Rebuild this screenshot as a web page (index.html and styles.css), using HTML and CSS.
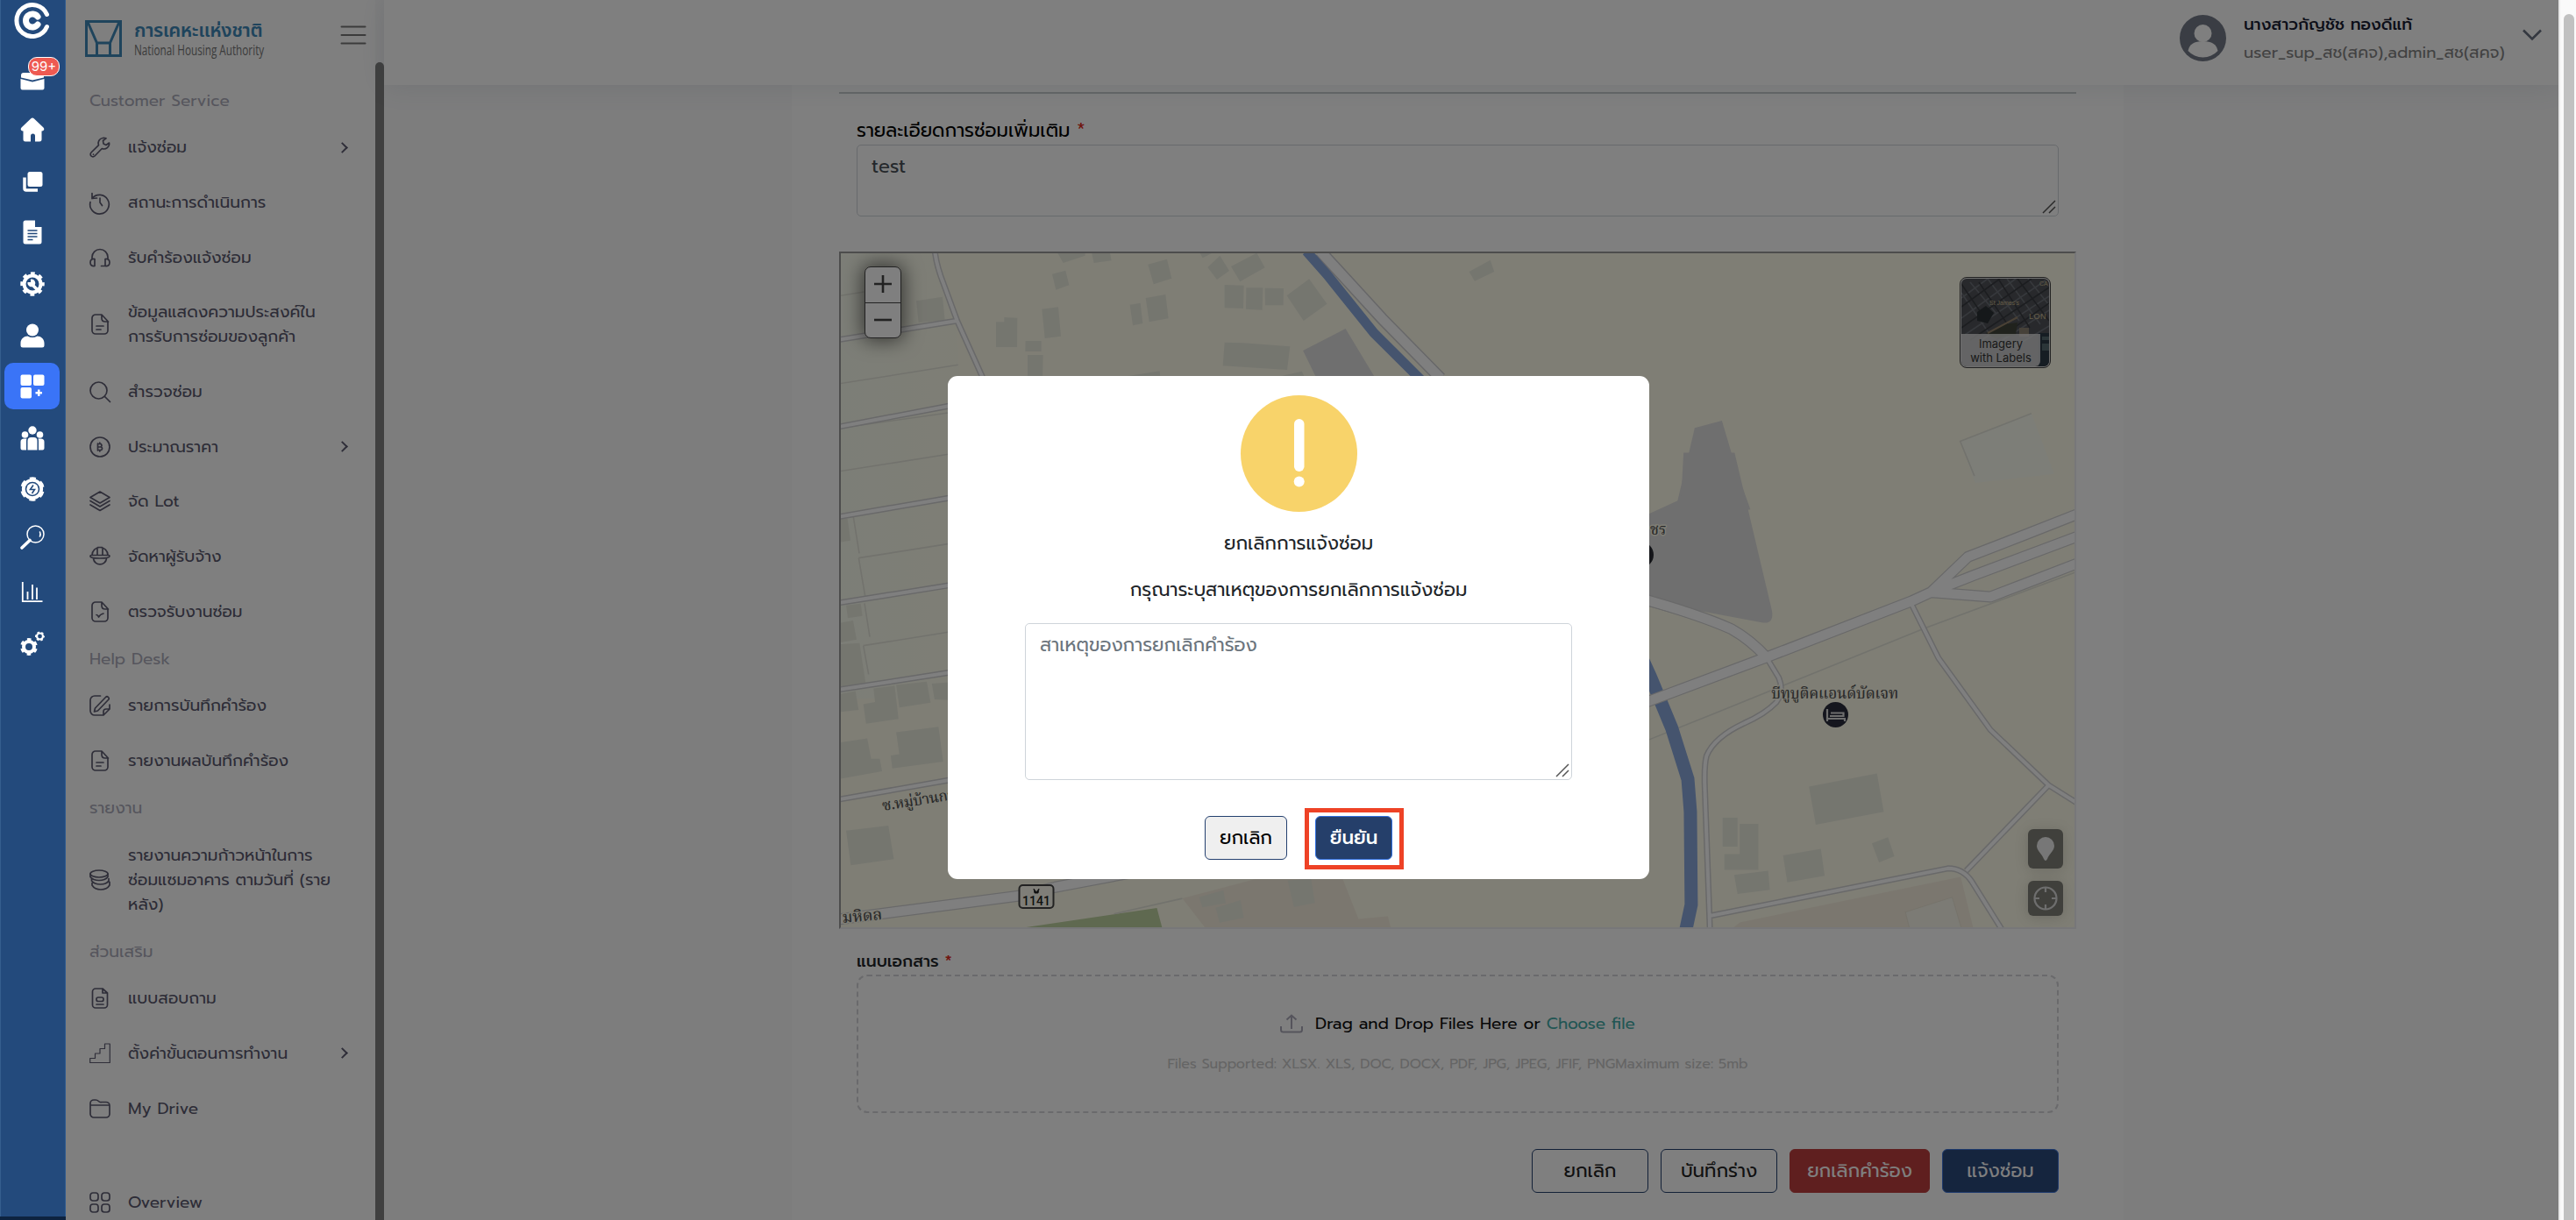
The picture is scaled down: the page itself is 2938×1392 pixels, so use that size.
FILE: index.html
```html
<!DOCTYPE html>
<html lang="th">
<head>
<meta charset="utf-8">
<title>แจ้งซ่อม</title>
<link rel="stylesheet" href="styles.css">
</head>
<body>
<nav class="rail">
  <div class="rail-logo"><svg width="42" height="42" viewBox="0 0 42 42" fill="none" stroke="#fff" stroke-linecap="round"><path d="M37.500 14.500A18 18 0 1 0 37.500 28.500" stroke-width="5"/><path d="M27 17a7.500 7.500 0 1 0 0 9" stroke-width="7"/></svg></div>
  <div class="rail-mail"><svg width="28" height="20" viewBox="0 0 28 20"><path fill="#fff" d="M1 3a3 3 0 0 1 3-3h20a3 3 0 0 1 3 3v2.500L14 8.500 1 5.500zM.5 7 14 10.500 27.500 7v10.500a2 2 0 0 1-2 2h-23a2 2 0 0 1-2-2z"/></svg><span class="badge">99+</span></div>
  <div class="slot"><svg viewBox="0 0 28 28"><path fill="#fff" d="M12 1.500a3 3 0 0 1 4 0l10.500 10c1.500 1.500.8 4-1.500 4h-.5V25a2.500 2.500 0 0 1-2.500 2.500h-5V21a2.500 2.500 0 0 0-5 0v6.500H6A2.500 2.500 0 0 1 3.500 25v-9.500H3c-2.300 0-3-2.500-1.500-4z"/></svg></div>
  <div class="slot"><svg viewBox="0 0 28 28"><rect x="8.500" y="3" width="17" height="17" rx="2.500" fill="#fff"/><path d="M5 9.500v12.500a2 2 0 0 0 2 2h13" fill="none" stroke="#fff" stroke-width="3.500"/></svg></div>
  <div class="slot"><svg viewBox="0 0 28 28"><path fill="#fff" d="M3.500 3A2.500 2.500 0 0 1 6 .5h11V8h7.500v17a2.500 2.500 0 0 1-2.500 2.500H6A2.500 2.500 0 0 1 3.500 25z"/><path stroke="#234a7c" stroke-width="1.500" d="M8.500 12h11M8.500 15.500h11M8.500 19h11M8.500 22.500h6"/></svg></div>
  <div class="slot"><svg viewBox="0 0 28 28"><circle cx="14" cy="14" r="9.500" fill="none" stroke="#fff" stroke-width="4"/><circle cx="14" cy="14" r="12" fill="none" stroke="#fff" stroke-width="3.500" stroke-dasharray="4.700 4.725" stroke-dashoffset="2.350"/><path d="M19.500 20.500 14 15" stroke="#fff" stroke-width="3.500"/><path d="M12 8.500v3.500H8.500a4.500 4.500 0 0 0 7.500 4 4.500 4.500 0 0 0-4-7.500z" fill="#fff"/></svg></div>
  <div class="slot"><svg viewBox="0 0 28 28" fill="#fff"><circle cx="14" cy="7.500" r="7"/><path d="M.5 25v-2.500c0-5 4-8 8-8q5.500 3 11 0c4 0 8 3 8 8V25a2.500 2.500 0 0 1-2.500 2.500H3A2.500 2.500 0 0 1 .5 25z"/></svg></div>
  <div class="slot active"><svg viewBox="0 0 28 28" fill="#fff"><rect x=".5" y=".5" width="12.500" height="12.500" rx="2"/><rect x="15" y=".5" width="12.500" height="12.500" rx="2"/><rect x=".5" y="15" width="12.500" height="12.500" rx="2"/><path d="M20 17.500h2.500V20H25v2.500h-2.500V25H20v-2.500h-2.500V20H20z"/></svg></div>
  <div class="slot"><svg viewBox="0 0 28 28" fill="#fff"><circle cx="14" cy="5" r="4.700"/><circle cx="5.500" cy="10" r="3.800"/><circle cx="22.500" cy="10" r="3.800"/><path d="M8.500 27.500V17q0-4 4-4h3q4 0 4 4v10.500zM.5 25.500V18q0-3.500 4-3.500h3q-.5 1-.5 2.500v10.500H2.500a2 2 0 0 1-2-2zM27.500 25.500V18q0-3.500-4-3.500h-3q.5 1 .5 2.500v10.500h4.500a2 2 0 0 0 2-2z"/></svg></div>
  <div class="slot"><svg viewBox="0 0 28 28" fill="none" stroke="#fff"><circle cx="14" cy="14" r="10.200" stroke-width="3.800"/><circle cx="14" cy="14" r="12.200" stroke-width="3" stroke-dasharray="7 5.776" stroke-dashoffset="-2.900"/><circle cx="14" cy="14" r="6.700" fill="#fff" stroke="none"/><path d="M15 9.500l-3.500 5h5l-3 4.500" stroke="#234a7c" stroke-width="1.600"/></svg></div>
  <div class="slot lift"><svg viewBox="0 0 28 28" fill="none" stroke="#fff" stroke-linecap="round"><circle cx="17.500" cy="10.500" r="9.500" stroke-width="1.500"/><path d="M2 26 11 17.500" stroke-width="3.600"/><path d="M22.500 8q1.200 2.500 0 5" stroke-width="1.600"/></svg></div>
  <div class="slot"><svg viewBox="0 0 28 28" fill="none" stroke="#fff" stroke-width="1.800"><path d="M2.800 2v22.200H25.500"/><path d="M8.500 22v-9M14 22V5M19 22V8.500"/></svg></div>
  <div class="slot"><svg viewBox="0 0 28 28" fill="none" stroke="#fff"><circle cx="10" cy="18" r="6" stroke-width="4"/><circle cx="10" cy="18" r="8.500" stroke-width="2.800" stroke-dasharray="4.450 4.450" stroke-dashoffset="-2.200"/><circle cx="22.500" cy="6" r="3.500" stroke-width="2.200"/><circle cx="22.500" cy="6" r="4.700" stroke-width="1.600" stroke-dasharray="2.460 2.460" stroke-dashoffset="1.200"/></svg></div>
</nav>

<aside class="side">
  <div class="brand">
    <svg width="42" height="42" viewBox="0 0 42 42" fill="none" stroke="#3f88b8" stroke-width="3"><path d="M1.500 1.500h39v39h-39zM3 2l10.500 24v14M39 2 28.500 26v14M13.500 26h15"/></svg>
    <div class="brand-text"><b>การเคหะแห่งชาติ</b><i>National Housing Authority</i></div>
    <svg class="burger" width="30" height="22" viewBox="0 0 30 22" stroke="#777" stroke-width="2" stroke-linecap="round"><path d="M1.500 1.500h27M1.500 11h27M1.500 20.500h27"/></svg>
  </div>
  <h4>Customer Service</h4>
  <a><svg viewBox="0 0 24 24"><path d="M15 1.500a6 6 0 0 0-4.500 8.200L2 18a2.700 2.700 0 0 0 4 4l8.300-8.500a6 6 0 0 0 8.200-6.500L19 9.500 16 8l-.5-3.500L19 1.800q-2-.8-4-.3zM4.500 20.200v.1"/></svg><span>แจ้งซ่อม</span><em></em></a>
  <a><svg viewBox="0 0 24 24"><path d="M3 7.500a10.800 10.800 0 1 1-2 4M3 1.500v6l5.500-.5M12 7v5l2.500 3.500"/></svg><span>สถานะการดำเนินการ</span></a>
  <a><svg viewBox="0 0 24 24"><path d="M3 14v-2.500a9 9 0 0 1 18 0V14M6 13.500q-5-.5-5 4t5 4zM18 13.500q5-.5 5 4t-5 4zM18 21.500h-4.500"/></svg><span>รับคำร้องแจ้งซ่อม</span></a>
  <a><svg viewBox="0 0 24 24"><path d="M14 1H7a4 4 0 0 0-4 4v14a4 4 0 0 0 4 4h10a4 4 0 0 0 4-4V8.500zV5q0 4 4 4h3.500M8 14h8M8 18h5"/></svg><span>ข้อมูลแสดงความประสงค์ใน<br>การรับการซ่อมของลูกค้า</span></a>
  <a><svg viewBox="0 0 24 24"><circle cx="10.500" cy="10.500" r="9.500"/><path d="m17.500 17.500 6 6"/></svg><span>สำรวจซ่อม</span></a>
  <a><svg viewBox="0 0 24 24"><circle cx="12" cy="12" r="11"/><path d="M9.500 8v8M9.500 8.500h3.500q2 1.700 0 3.500H9.500h4q2.200 1.700 0 3.500h-4M11.800 7v1.500M11.800 15.500V17"/></svg><span>ประมาณราคา</span><em></em></a>
  <a><svg viewBox="0 0 24 24"><path d="M12 1 23 7.500 12 14 1 7.500zM1 11.500 12 18l11-6.500M1 16l11 6.500L23 16"/></svg><span>จัด Lot</span></a>
  <a><svg viewBox="0 0 24 24"><path d="M3 10.500a9 9 0 0 1 18 0M9 10V2.500M15 10V2.500M9.500 1.500h5M1 11.500q0-1 1-1h20q1 0 1 1 0 2.500-11 2.500T1 11.500zM4.500 14.500a7.600 7.600 0 0 0 15 0"/></svg><span>จัดหาผู้รับจ้าง</span></a>
  <a><svg viewBox="0 0 24 24"><path d="M14 1H7a4 4 0 0 0-4 4v14a4 4 0 0 0 4 4h10a4 4 0 0 0 4-4V8.500zV5q0 4 4 4h3.500M8 15.500q1.500 0 2.500 2.500 1.500-3 5.500-4"/></svg><span>ตรวจรับงานซ่อม</span></a>
  <h4>Help Desk</h4>
  <a><svg viewBox="0 0 24 24"><path d="M12.500 1H6a5 5 0 0 0-5 5v12a5 5 0 0 0 5 5h10l7-7v-5M16 23v-4q0-3 3-3h4M18.500 2.500q1.500-1.500 3 0t0 3L9.500 18l-4 1 1-4z"/></svg><span>รายการบันทึกคำร้อง</span></a>
  <a><svg viewBox="0 0 24 24"><path d="M14 1H7a4 4 0 0 0-4 4v14a4 4 0 0 0 4 4h10a4 4 0 0 0 4-4V8.500zV5q0 4 4 4h3.500M8 14h8M8 18h5"/></svg><span>รายงานผลบันทึกคำร้อง</span></a>
  <h4>รายงาน</h4>
  <a><svg viewBox="0 0 24 24"><ellipse cx="11" cy="5" rx="10" ry="4"/><path d="M1 5v3.500q3 4 10 4t10-4V5M2.500 10.500V13q3 4 10 4t9.500-4v-2.500M3 15.500V18q3 5 10 5t10-5v-3.500l-1.500-1"/></svg><span>รายงานความก้าวหน้าในการ<br>ซ่อมแซมอาคาร ตามวันที่ (ราย<br>หลัง)</span></a>
  <h4>ส่วนเสริม</h4>
  <a><svg viewBox="0 0 24 24"><path d="M15 1H7a3.500 3.500 0 0 0-3.500 3.500v15A3.500 3.500 0 0 0 7 23h10a3.500 3.500 0 0 0 3.500-3.500V6zV6h5M8 19h8"/><rect x="8" y="11" width="8" height="4.500" rx="2"/></svg><span>แบบสอบถาม</span></a>
  <a><svg viewBox="0 0 24 24" class="thin"><path d="M.7 22.500V17.500H6.500V12H12V6.500H17.500V1h5.800v21.500z"/></svg><span>ตั้งค่าขั้นตอนการทำงาน</span><em></em></a>
  <a><svg viewBox="0 0 24 24"><path d="M1 6a4 4 0 0 1 4-4h2q2 0 3.500 1.500T14 4.500h5a4 4 0 0 1 4 4V18a4 4 0 0 1-4 4H5a4 4 0 0 1-4-4zM1 8h22"/></svg><span>My Drive</span></a>
  <h4></h4>
  <a><svg viewBox="0 0 24 24"><rect x="1" y="1" width="9" height="9" rx="3"/><rect x="14" y="1" width="9" height="9" rx="3"/><rect x="1" y="14" width="9" height="9" rx="3"/><rect x="14" y="14" width="9" height="9" rx="3"/></svg><span>Overview</span></a>
</aside>
<div class="side-bar"></div>

<main class="page">
  <header class="top">
    <svg width="53" height="53" viewBox="0 0 53 53"><circle cx="26.500" cy="26.500" r="26.500" fill="#747b88"/><circle cx="26.500" cy="21" r="10" fill="#fff"/><path d="M9.500 41q2-11 17-11t17 11a23 23 0 0 1-34 0z" fill="#fff"/></svg>
    <div class="who"><b>นางสาวกัญชัช ทองดีแท้</b><span>user_sup_สช(สคจ),admin_สช(สคจ)</span></div>
    <svg width="22" height="14" viewBox="0 0 22 14" fill="none" stroke="#687080" stroke-width="2.600"><path d="m1 1.500 10 10 10-10"/></svg>
  </header>
  <section class="card">
    <hr>
    <label class="lab">รายละเอียดการซ่อมเพิ่มเติม <u>*</u></label>
    <div class="area">test<svg class="grip" viewBox="0 0 16 16"><path d="M1 15 15 1M8 15l7-7"/></svg></div>
    <div class="map">
      <svg class="tiles" viewBox="959 289 1407 769" preserveAspectRatio="none">
        <defs>
          <linearGradient id="fields"><stop offset="0" stop-color="#f9fcef"/><stop offset="1" stop-color="#fdfceb"/></linearGradient>
        </defs>
        <rect x="959" y="289" width="1407" height="769" fill="#fefcea"/>
        <path d="M959 289h108l24 78 10 200-18 230-124 0z" fill="url(#fields)"/>
        <g transform="translate(950 280) scale(.33333)">
          <g class="bld"><path d="M285 190l90-14 8 80-90 8zM768 25l20 35 75-25 0-10zM885 25l8 35 60-8-5-27zM750 98l46-12 12 50-45 16zM1078 65l65-18 16 66-62 20zM1282 75l42-40 32 52-42 30zM1362 72l88-46 28 50-85 48zM1340 135l66 2-2 79-64-2zM1414 145l57 0-2 76-56-3zM1478 146l64 1-1 58-62 0zM715 218l56-7 9 100-55 7zM586 246l45 2-1 100-72 0 0-86 28 0zM659 327l54 0 0 36-55 0zM666 375l53 0-2 80-51 0zM1016 203l36-6 8 70-34 7zM1070 180l68-12 10 82-66 12zM1340 332l64 2 160 12-10 80-220-14zM1010 447l108-17 2 22zM1255 25l10 18 30-15z"/>
          <path d="M25 935l25 0 10 75-35 6zM45 1232l50-6 6 42-50 8zM25 1292l44-8 12 65-56 10zM25 1365l66-4 22 145-88 10z"/></g>
          <path class="ln" d="M25 172l82-13M25 473l403-64M25 773l370-58M70 930l20 124M88 1070l305-48M88 1070l22 130M108 1225l18 115M104 1370l290-46M104 1370l18 98M25 625l370-52"/>
          <g class="case"><path d="M348 15Q354 70 378 130L425 258 510 447 540 520M25 322L425 258M25 620L400 549M25 928L400 864M25 1223L400 1163M25 1520L400 1462"/></g>
          <g class="road"><path d="M348 15Q354 70 378 130L425 258 510 447 540 520M25 322L425 258M25 620L400 549M25 928L400 864M25 1223L400 1163M25 1520L400 1462"/></g>
        </g>
        <g transform="translate(900 80) scale(.63776 .33333)">
          <path d="M890 772l40-57 32 85-42 58zM1216 690l38-40 7 40-35 32zM880 1047l37-16 4 16z" class="bld"/>
          <path d="M919 960l76-75 52 165-105 0z" fill="#dedede"/>
          <path d="M950 620L1060 850 1165 1055" fill="none" stroke="#cfcfd2" stroke-width="14" vector-effect="non-scaling-stroke"/>
          <path d="M950 620L1060 850 1165 1055" fill="none" stroke="#fff" stroke-width="11" vector-effect="non-scaling-stroke"/>
          <path d="M925 620L962 700 1046 900 1130 1060" fill="none" stroke="#8aa8dc" stroke-width="11" vector-effect="non-scaling-stroke"/>
        </g>
        <g transform="translate(1780 0) scale(.73855 .34439)">
          <path d="M207 1418l42-24 24 174 20 120-120 40z" fill="#dedede"/>
          <path d="M617 1462l110-92 35 200-122 30z" fill="#fbfcf1"/><path class="ln" d="M727 1370l-110 92 22 115"/>
        </g>
        <g transform="translate(1640 560) scale(.48473 .53062)">
          <path d="M400 90l172-72 6-100 120 0 88 340q5 30-24 25l-380-65z" fill="#dedede"/>
          <path class="bld" d="M873 636l160-28 16 82-160 28zM670 703l35 0 0 62-35 0zM710 716l44 0 0 99-80 0 0-34 36 0zM812 784l89-14 9 58-88 14zM1021 758l38-13 15 41-36 13zM697 826l80-9 4 41-76 9z"/>
          <path d="M692 942l18-14 520-98 30 112z" fill="#f7eede"/><path d="M1100 906l110-32 22 68-122 0z" fill="#f9f7ea" class="edge"/>
          <path class="ln" d="M497 535l150-55 500-185 360-122"/>
          <path d="M450 300L500 400 550 510 588 620 594 690 596 890 582 950" fill="none" stroke="#8aa8dc" stroke-width="15" vector-effect="non-scaling-stroke"/>
          <g class="case"><path d="M480 238Q610 270 690 300 735 320 773 358L802 402Q815 430 796 455 770 480 720 500 650 530 632 570 626 590 628 640L640 945M1115 245L1178 360 1300 514 1437 633 1505 672M1437 633L1243 817M640 914L1200 812Q1235 812 1256 840L1328 945"/><path class="w" d="M480 458L773 358 1115 237 1160 218 1247 142 1380 95 1505 50M1160 218L1260 182 1505 98M1160 218L1300 228 1380 200 1505 156M480 232Q610 265 690 297 735 320 773 358"/></g>
          <g class="road"><path d="M480 238Q610 270 690 300 735 320 773 358L802 402Q815 430 796 455 770 480 720 500 650 530 632 570 626 590 628 640L640 945M1115 245L1178 360 1300 514 1437 633 1505 672M1437 633L1243 817M640 914L1200 812Q1235 812 1256 840L1328 945"/><path class="w" d="M480 458L773 358 1115 237 1160 218 1247 142 1380 95 1505 50M1160 218L1260 182 1505 98M1160 218L1300 228 1380 200 1505 156M480 232Q610 265 690 297 735 320 773 358"/></g>
        </g>
        <g transform="translate(940 780) scale(.44643 .39032)">
          <path class="bld" d="M42 30l38-8 8 55-46 6zM100 60l30-6-4-40 54-8 10 97-83 14zM184 4l78-10 10 62-80 14zM275 0l45-4 0 52-38-2zM184 142l108-16 12 102-130 20-4-38 22-4zM42 172l68-12 10 60 22 0 6 36-106 22zM56 430l108-15 14 98-110 18z"/>
          <path d="M500 715L850 656l14 60z" fill="#bed2a0"/>
          <path d="M915 628L1100 572 1325 572 1365 688 1440 680 1448 716 975 716z" fill="#f7eede"/>
          <path class="bld" d="M958 624l62-20 6 38-60 12zM1000 655l64-22 8 52-62 14zM1184 575l60-4 10 70-54 12z"/>
          <path class="ln" d="M740 673L915 628"/>
          <g class="case"><path d="M30 340L330 280"/><path class="w" d="M30 690L500 620 590 595 800 550"/></g>
          <g class="road"><path d="M30 340L330 280"/><path class="w" d="M30 690L500 620 590 595 800 550"/></g>
        </g>
        <g class="maptext">
          <text x="2020" y="797" textLength="145">บีทูบูติคแอนด์บัดเจท</text>
          <text x="1882" y="610">ชร</text>
          <text x="1007" y="925" transform="rotate(-9 1007 925)" textLength="92">ซ.หมู่บ้านการ</text>
          <text class="big" x="961" y="1053" transform="rotate(-5 961 1053)">มหิดล</text>
        </g>
        <circle cx="1871" cy="633" r="15" fill="#2a2d34"/>
        <circle cx="2093.500" cy="815.500" r="14.500" fill="#2a2d3c"/><path d="M2084 809v14M2084 820h20v3M2088 813.500h14.500v3.500H2087" fill="none" stroke="#ddd" stroke-width="2.200"/>
        <rect x="1162.500" y="1010" width="39" height="26" rx="4" fill="#fefcf0" stroke="#444" stroke-width="2"/><path d="M1179 1014l3 4 3-4-1 5h-4z" stroke="#333" stroke-width="1"/>
        <text class="shield" x="1182" y="1032.500" text-anchor="middle">1141</text>
      </svg>
      <div class="zoomer"><div><svg viewBox="0 0 20 20"><path d="M0 10h20M10 0v20"/></svg></div><div><svg viewBox="0 0 20 20"><path d="M0 10h20"/></svg></div></div>
      <div class="basemap">
        <svg viewBox="0 0 100 100"><rect width="100" height="100" fill="#505358"/><g stroke="#6d7178" stroke-width="1.600" fill="none"><path d="M0 22 30 0M0 45 62 0M4 64 96 2M20 72 100 20M44 72 100 36M60 78 100 54M10 4 40 40M30 0 66 48M52 0 90 52M0 16 34 66M76 0 100 30"/></g><g stroke="#383b40" stroke-width="1.600" fill="none"><path d="M0 32 44 0M0 56 80 0M10 70 100 10M34 74 100 28M20 4 54 54M42 0 78 56M0 6 30 50M64 0 100 48"/></g><path d="M18 38l10-7 9 8-7 12-12-3z" fill="#2a3034"/><path d="M28 62l22-10 14-2-2 14-24 4z" fill="#41443a"/><path d="M66 56h11v10H66z" fill="#8d8272"/><path d="M88 62h12v38H88z" fill="#2d3a46"/><path d="M92 66h8v4h-8zM92 74h8v8h-8z" fill="#566a70"/><path d="M30 62 64 44" stroke="#94836b" stroke-width="2"/><text x="32" y="30">St James's</text><text x="77" y="46" class="lg">LON</text><text x="89" y="8">CA</text></svg>
        <span>Imagery<br>with Labels</span>
      </div>
      <div class="tools">
        <div class="t1"><svg width="20" height="27" viewBox="0 0 20 27"><path d="M10 0a10 10 0 0 1 10 10c0 6-6 9-8 15q-2 4-4 0C6 19 0 16 0 10A10 10 0 0 1 10 0z" fill="#eee"/></svg></div>
        <div class="t2"><svg width="28" height="28" viewBox="0 0 28 28" fill="none" stroke="#ddd" stroke-width="2.200"><circle cx="14" cy="14" r="12.500"/><path d="M14 2v5M14 21v5M2 14h5M21 14h5"/></svg></div>
      </div>
    </div>
    <label class="lab2">แนบเอกสาร <u>*</u></label>
    <div class="drop">
      <p class="d1"><svg width="26" height="22" viewBox="0 0 26 22" fill="none" stroke="#aaa9b8" stroke-width="2"><path d="M1 14v4a2.500 2.500 0 0 0 2.500 2.500h19A2.500 2.500 0 0 0 25 18v-4M13 17V1.500M7.500 6.500 13 1.500l5.500 5"/></svg><span>Drag and Drop Files Here or <mark>Choose file</mark></span></p>
      <p class="d2">Files Supported: XLSX. XLS, DOC, DOCX, PDF, JPG, JPEG, JFIF, PNGMaximum size: 5mb</p>
    </div>
    <div class="acts"><button class="o">ยกเลิก</button><button class="o">บันทึกร่าง</button><button class="r">ยกเลิกคำร้อง</button><button class="b">แจ้งซ่อม</button></div>
  </section>
</main>
<div class="scroll"><i></i></div>

<div class="shade"></div>
<div class="modal">
  <svg width="134" height="134" viewBox="0 0 134 134"><circle cx="67.500" cy="66.500" r="66.500" fill="#f8d36a"/><rect x="62" y="27" width="11.500" height="60" rx="5.700" fill="#fff"/><circle cx="67.700" cy="98.500" r="6" fill="#fff"/></svg>
  <p class="m1">ยกเลิกการแจ้งซ่อม</p>
  <p class="m2">กรุณาระบุสาเหตุของการยกเลิกการแจ้งซ่อม</p>
  <div class="area reason">สาเหตุของการยกเลิกคำร้อง<svg class="grip" viewBox="0 0 16 16"><path d="M1 15 15 1M8 15l7-7"/></svg></div>
  <div class="macts"><button class="c">ยกเลิก</button><button class="b">ยืนยัน<i class="ring"></i></button></div>
</div>
</body>
</html>
```
FILE: styles.css
```css
* { box-sizing: border-box; }
body { margin: 0; width: 2938px; height: 1392px; overflow: hidden; display: flex; background: #fafafb; font: 400 21.33px/32px Prompt, "Noto Sans Thai", "Noto Sans", sans-serif; color: #212529; position: relative; }
p, h4 { margin: 0; font-weight: 400; }
u { color: #e02b20; text-decoration: none; }

/* icon rail */
.rail { width: 75px; height: 1388px; background: #234a7c; border-left: 1px solid #355e8e; border-right: 1px solid #2d5a90; flex: none; position: relative; z-index: 3; box-shadow: 0 4px 0 #0d2340; }
.rail-logo { height: 77px; padding: 2px 0 0 15px; }
.rail-mail { height: 42px; padding: 3px 0 0 22px; position: relative; }
.badge { position: absolute; left: 31px; top: -12px; width: 36px; height: 22px; border: 1px solid #fff; border-radius: 10px; background: #ee5a52; color: #fff; font: 400 15px/20px Inter, sans-serif; text-align: center; }
.slot { height: 58.6px; display: flex; align-items: center; justify-content: center; padding-right: 1px; }
.slot svg { width: 28px; height: 28px; }
.slot.active { position: relative; }
.slot.active::before { content: ""; position: absolute; left: 4px; top: 2px; width: 63px; height: 53px; border-radius: 10px; background: #3a74f7; }
.slot.active svg { position: relative; }
.lift { padding-bottom: 8px; }

/* side menu */
.side { width: 353px; background: #fff; flex: none; padding-left: 27px; overflow: hidden; height: 1392px; }
.brand { height: 92px; display: flex; padding: 23px 0 0; margin-left: -5px; }
.brand-text { margin-left: 14px; width: 235px; display: flex; flex-direction: column; }
.brand-text b { font: 600 22px/26px "Noto Sans Thai", sans-serif; color: #3f88b8; letter-spacing: -.4px; }
.brand-text i { font: normal 500 17px/16px "Open Sans", sans-serif; color: #777; transform: scaleX(.69); transform-origin: 0 0; white-space: nowrap; }
.burger { margin-top: 6px; flex: none; }
.side h4 { height: 45px; font-size: 18.67px; line-height: 47px; color: #acacbb; }
.side a { display: flex; align-items: center; min-height: 62.67px; padding: 17.33px 0; font-size: 18.67px; line-height: 28px; color: #5a596e; font-weight: 400; }
.side a svg { width: 24px; height: 24px; margin-right: 20px; flex: none; fill: none; stroke: #5e5d72; stroke-width: 1.7; stroke-linejoin: round; stroke-linecap: round; overflow: visible; }
.side a svg.thin { stroke-width: 1.2; }
.side a span { width: 240px; white-space: nowrap; }
.side em { width: 9px; height: 9px; border: solid #5e5d72; border-width: 2px 2px 0 0; transform: rotate(45deg); }
.side-bar { width: 10px; margin-top: 71px; background: #808080; border-radius: 5px 5px 0 0; flex: none; }

/* page */
.page { flex: 1; display: flex; flex-direction: column; align-items: stretch; }
.top { height: 97px; background: #fff; box-shadow: 0 0 30px rgba(60, 80, 110, .12); display: flex; padding: 17px 19px 0 0; justify-content: flex-end; position: relative; flex: none; z-index: 1; }
.who { display: flex; flex-direction: column; margin: -5px 20px 0 20px; width: 298px; white-space: nowrap; }
.who b { font-weight: 500; font-size: 18.67px; color: #181c32; }
.who span { font-size: 18.67px; color: #858585; }
.top svg:last-child { margin-top: 16px; }
.card { width: 1519px; margin-left: 465px; height: 1295px; background: #fff; padding: 8px 54px 0; display: flex; flex-direction: column; flex: none; }
hr { width: 1411px; height: 2px; border: 0; background: #c9cdd0; margin: 0; flex: none; }
.lab { margin: 26px 0 0 20px; line-height: 32px; color: #000; }
.area { margin-left: 20px; width: 1371px; height: 82px; border: 1px solid #ced4da; border-radius: 5px; padding: 8px 16px; position: relative; color: #495057; }
.grip { position: absolute; right: 2px; bottom: 2px; width: 16px; height: 16px; fill: none; stroke: #555; stroke-width: 1.5; }

/* map */
.map { width: 1411px; height: 773px; margin-top: 40px; border: 2px solid; border-color: #9a9a9a #efeff2 #efeff2 #9a9a9a; position: relative; overflow: hidden; }
.tiles { display: block; width: 1407px; height: 769px; }
.bld { fill: #ebecdf; }
.ln { fill: none; stroke: #e4e5da; stroke-width: 1.6; vector-effect: non-scaling-stroke; }
.edge { stroke: #dfdccc; stroke-width: 1; }
.case path, .road path { fill: none; vector-effect: non-scaling-stroke; stroke-linejoin: round; }
.case path { stroke: #d2d2d3; stroke-width: 7px; }
.road path { stroke: #fff; stroke-width: 4px; }
.case .w { stroke-width: 13px; }
.road .w { stroke-width: 10.5px; }
.maptext { font: 500 17px "Noto Serif Thai", "Liberation Sans", sans-serif; fill: #555; paint-order: stroke; stroke: #fefcea; stroke-width: 3px; }
.maptext .big { font-size: 18px; }
.shield { font: 500 14px Roboto, sans-serif; fill: #222; }
.zoomer { position: absolute; left: 27px; top: 15px; width: 42px; height: 82px; background: #fff; border: 1px solid #444; border-radius: 7px; box-shadow: 0 0 22px 2px rgba(0, 0, 0, .6); }
.zoomer div { height: 40px; padding: 9px 10px; }
.zoomer div + div { border-top: 1px solid #444; }
.zoomer svg { display: block; width: 20px; height: 20px; stroke: #444; stroke-width: 2.6; }
.basemap { position: absolute; left: 1276px; top: 27px; width: 104px; height: 104px; border: 1px solid #444; border-radius: 8px; overflow: hidden; background: #ddd; padding: 1px; }
.basemap svg { display: block; width: 100px; height: 100px; border-radius: 6px; }
.basemap text { font: 7px "Liberation Sans", sans-serif; fill: #c9b98f; }
.basemap .lg { font-size: 9px; letter-spacing: .5px; }
.basemap span { position: absolute; left: 1px; bottom: 1px; width: 90px; height: 37px; background: rgba(235, 235, 235, .78); font: 13px/16px Inter, sans-serif; color: #333; text-align: center; padding-top: 3px; border-radius: 0 0 6px 6px; }
.tools { position: absolute; left: 1354px; top: 657px; width: 40px; display: flex; flex-direction: column; gap: 14px; }
.tools div { border-radius: 6px; background: #808078; display: flex; align-items: center; justify-content: center; box-shadow: 0 2px 16px rgba(0, 0, 0, .15); }
.t1 { height: 45px; }
.t2 { height: 40px; }

/* attachments and actions */
.lab2 { margin: 22px 0 0 20px; font-size: 18.67px; line-height: 30px; font-weight: 500; color: #212529; }
.drop { margin-left: 20px; width: 1371px; height: 158px; border: 2px dashed #d4d4d8; border-radius: 12px; text-align: center; padding-top: 38px; flex: none; }
.d1 { display: flex; align-items: center; justify-content: center; gap: 14px; font-size: 18.67px; color: #111; }
mark { background: none; color: #44aca8; }
.d2 { font-size: 16px; margin-top: 14px; color: #cacaca; }
.acts { display: flex; justify-content: flex-end; gap: 14px; margin: 41px 20px 0 0; }
button { font: 400 21.33px/32px Prompt, "Noto Sans Thai", sans-serif; height: 50px; padding: 0; border: 1px solid #24406f; border-radius: 6px; width: 133px; background: none; color: #222; position: relative; }
.acts .r { background: #be3e3e; border-color: #be3e3e; color: #fff; width: 160px; }
.acts .b { background: #2b4a7d; border-color: #3a72d8; color: #fff; }

.scroll { width: 20px; background: #fafafa; border-left: 2px solid #e8e8e8; position: relative; z-index: 3; flex: none; padding: 16px 2px 0 4px; }
.scroll i { display: block; width: 12px; height: 1400px; background: #c1c1c1; border-radius: 6px; }

/* dialog */
.shade { position: absolute; inset: 0; background: rgba(0, 0, 0, .5); z-index: 2; }
.modal { position: absolute; z-index: 4; left: 1081px; top: 429px; width: 800px; height: 574px; background: #fff; border-radius: 11px; display: flex; flex-direction: column; align-items: center; padding-top: 22px; }
.m1 { margin-top: 19px; }
.m2 { margin-top: 21px; }
.area.reason { margin: 22px 0 0; width: 624px; height: 179px; color: #6c757d; }
.macts { display: flex; gap: 32px; margin: 41px 0 0 0; }
.macts .c { width: 94px; background: #efefef; color: #000; }
.macts .b { width: 88px; background: #253f6a; border-color: #2f6fe0; color: #fff; font-weight: 500; }
.ring { position: absolute; left: -13px; top: -10px; width: 113px; height: 70px; border: 5px solid #ee4226; }
```
